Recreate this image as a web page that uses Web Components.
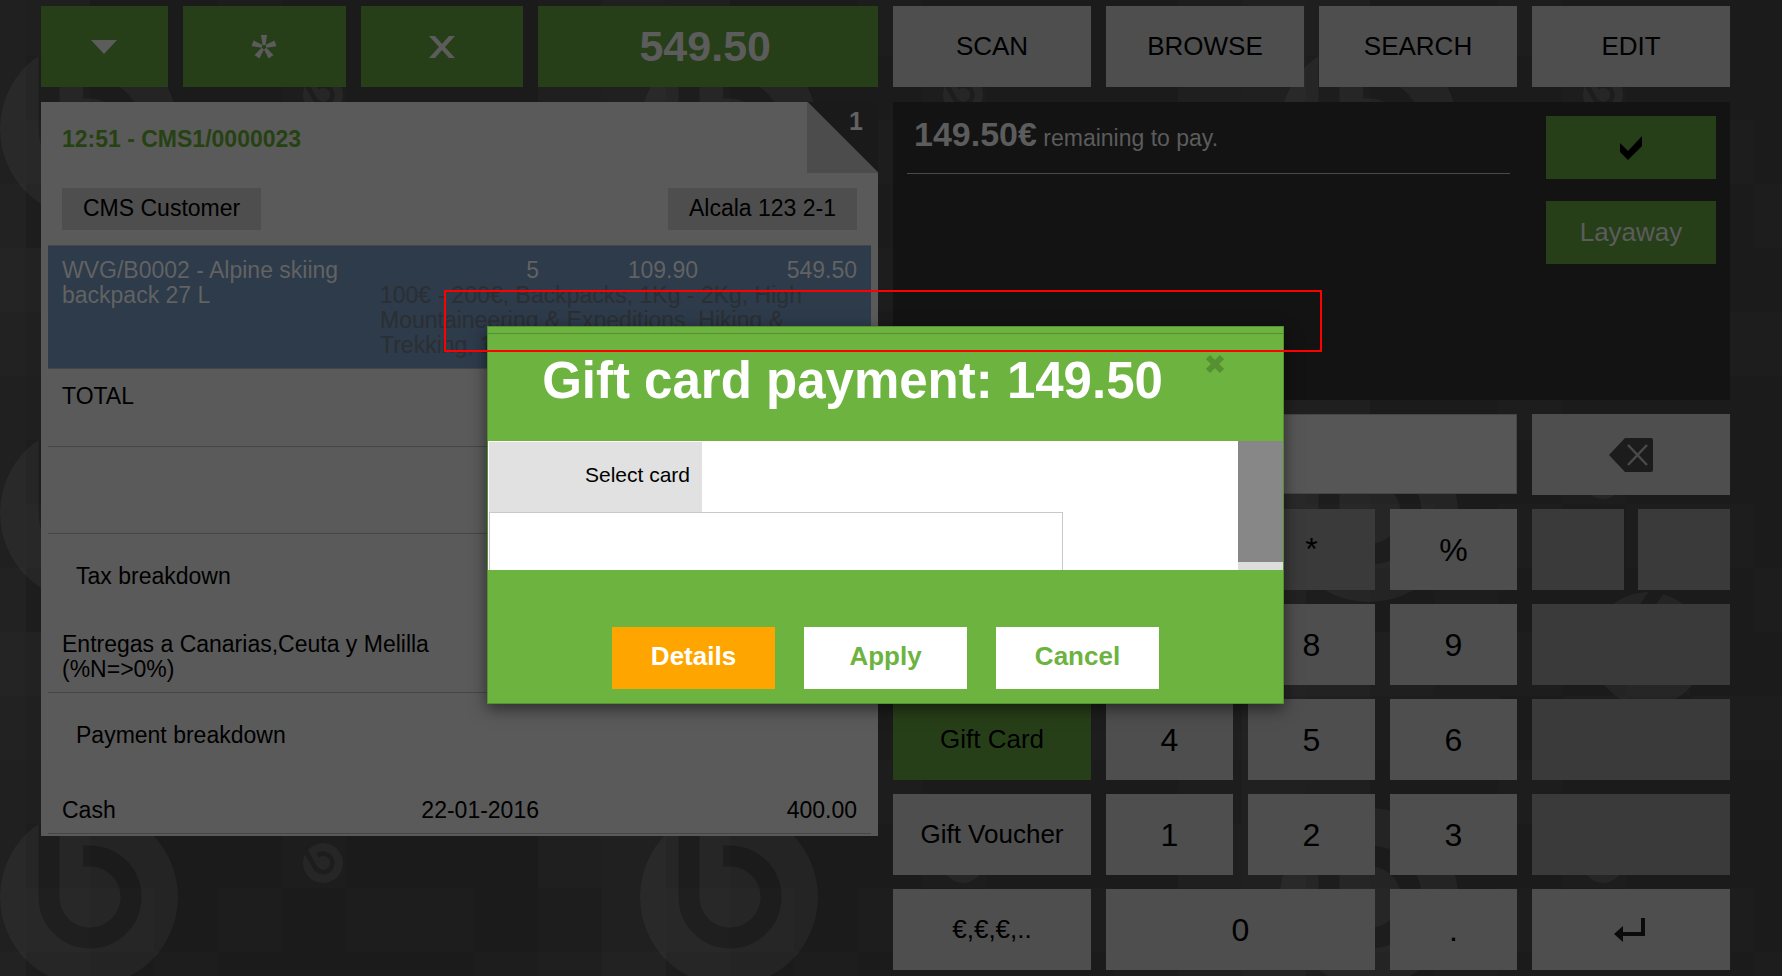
<!DOCTYPE html>
<html lang="en">
<head>
<meta charset="utf-8">
<meta name="viewport" content="width=device-width, initial-scale=1">
<title>Web POS</title>
<style>
    html, body {
        margin: 0;
        min-height: 100%;
        background: #1c1c1c;
    }
    body {
        font-family: "Liberation Sans", Arial, sans-serif;
        font-size: 23px;
        line-height: 25px;
        color: #000;
    }
</style>
</head>
<body>
<pos-app></pos-app>

<script>
// Tiled backdrop with the round "b" marks
class PosBackdrop extends HTMLElement {
    constructor() {
        super();
        this.attachShadow({ mode: 'open' });
    }

    connectedCallback() {
        // light level of each 64px square, one string per row
        const rows = [
            '1000100023',
            '2101011013',
            '1010000124',
            '4211010015',
            '3110101124',
            '2001000013'
        ];
        let squares = '';
        rows.forEach((row, y) => {
            [...row].forEach((level, x) => {
                squares += `<rect x="${x * 64}" y="${y * 64}" width="64" height="64" fill="#fff" fill-opacity="${level * 0.008}"/>`;
            });
        });

        this.shadowRoot.innerHTML = `
        <style>
            :host {
                display: block;
                position: absolute;
                inset: 0;
                overflow: hidden;
                background: #1b1b1b;
            }
            svg { display: block; width: 100%; height: 100%; }
        </style>
        <svg aria-hidden="true">
            <defs>
                <mask id="cut" maskUnits="userSpaceOnUse" x="-90" y="-90" width="180" height="180">
                    <circle r="89" fill="#fff"/>
                    <path d="M-40 -90V0A41 41 0 1 0 0 -41H-6" fill="none" stroke="#000" stroke-width="21"/>
                </mask>
                <g id="mark"><circle r="89" fill="#fff" fill-opacity="0.04" mask="url(#cut)"/></g>
                <pattern id="squares" x="26" y="56" width="640" height="384" patternUnits="userSpaceOnUse">${squares}</pattern>
                <pattern id="marks" x="0" y="24" width="640" height="384" patternUnits="userSpaceOnUse">
                    <use href="#mark" x="89" y="105"/>
                    <use href="#mark" transform="translate(323 71) rotate(-30) scale(0.225)"/>
                    <use href="#mark" transform="translate(368 241) rotate(35) scale(0.64)"/>
                </pattern>
            </defs>
            <rect width="100%" height="100%" fill="url(#squares)"/>
            <rect width="100%" height="100%" fill="url(#marks)"/>
        </svg>`;
    }
}

// Flat key. variant: green | light | total | digit | off | short
class PosKey extends HTMLElement {
    constructor() {
        super();
        this.attachShadow({ mode: 'open' });
    }

    connectedCallback() {
        const off = this.getAttribute('variant') === 'off';
        const label = this.getAttribute('label');
        this.shadowRoot.innerHTML = `
        <style>
            :host { display: block; height: 81px; }
            button {
                display: flex;
                align-items: center;
                justify-content: center;
                box-sizing: border-box;
                width: 100%;
                height: 100%;
                margin: 0;
                padding: 0 0 2px;
                border: 0;
                border-radius: 0;
                background: #4e4e4e;
                color: #000;
                font-family: inherit;
                font-size: 26px;
                line-height: 30px;
                white-space: nowrap;
                cursor: pointer;
            }
            :host([variant~="green"]) button { background: #273f18; }
            :host([variant~="light"]) button { color: #5c5c5c; }
            :host([variant~="total"]) button {
                padding-right: 6px;
                font-size: 43px;
                font-weight: bold;
                line-height: 50px;
            }
            :host([variant~="digit"]) button { padding: 0; font-size: 32px; line-height: 36px; }
            :host([variant~="off"]) button { background: #3a3a3a; font-size: 32px; line-height: 36px; }
            :host([variant~="short"]) { height: 63px; }
            :host([label]) button { padding: 0; }
        </style>
        <button type="button" ${off ? 'disabled' : ''} ${label ? `aria-label="${label}"` : ''}><slot></slot></button>`;
    }
}

class PosToolbar extends HTMLElement {
    constructor() {
        super();
        this.attachShadow({ mode: 'open' });
    }

    connectedCallback() {
        this.shadowRoot.innerHTML = `
        <style>
            :host { display: grid; grid-template-columns: 1fr 1fr; gap: 15px; }
            .left, .right { display: grid; gap: 15px; }
            .left { grid-template-columns: 127fr 163fr 163fr 340fr; }
            .right { grid-template-columns: repeat(4, 1fr); }
            svg { display: block; }
        </style>
        <div class="left">
            <pos-key variant="green light" label="Menu">
                <svg width="26" height="14" viewBox="0 0 26 14"><path d="M0 0H26L13 14Z" fill="#5c5c5c"/></svg>
            </pos-key>
            <pos-key variant="green light" label="New">
                <svg width="26" height="26" viewBox="-13 -13 26 26" fill="#5c5c5c">
                    <path d="M-3 -12H3L1.500 -2H-1.500Z"/>
                    <path d="M-3 -12H3L1.500 -2H-1.500Z" transform="rotate(72)"/>
                    <path d="M-3 -12H3L1.500 -2H-1.500Z" transform="rotate(144)"/>
                    <path d="M-3 -12H3L1.500 -2H-1.500Z" transform="rotate(216)"/>
                    <path d="M-3 -12H3L1.500 -2H-1.500Z" transform="rotate(288)"/>
                </svg>
            </pos-key>
            <pos-key variant="green light" label="Delete">
                <svg width="26" height="22" viewBox="0 0 26 22">
                    <path d="M0 0H6L13 8L20 0H26L16 11L26 22H20L13 14L6 22H0L10 11Z" fill="#5c5c5c"/>
                </svg>
            </pos-key>
            <pos-key variant="green light total">549.50</pos-key>
        </div>
        <div class="right">
            <pos-key>SCAN</pos-key>
            <pos-key>BROWSE</pos-key>
            <pos-key>SEARCH</pos-key>
            <pos-key>EDIT</pos-key>
        </div>`;
    }
}

class PosReceipt extends HTMLElement {
    constructor() {
        super();
        this.attachShadow({ mode: 'open' });
    }

    connectedCallback() {
        this.shadowRoot.innerHTML = `
        <style>
            :host {
                display: block;
                position: relative;
                align-self: start;
                box-sizing: border-box;
                padding: 25px 7px 2px;
                background: #5a5a5a;
            }
            h2 {
                margin: 0 14px 36px;
                font-size: 23px;
                line-height: 25px;
                color: #264212;
            }
            /* folded corner with the number of open receipts */
            .corner {
                position: absolute;
                top: 0;
                right: 0;
                box-sizing: border-box;
                width: 71px;
                height: 71px;
                padding: 7px 15px;
                background: linear-gradient(to top right, #4c4c4c 50%, #1a1a1a 51%);
                color: #626262;
                font-size: 25px;
                font-weight: bold;
                text-align: right;
            }
            .who { display: flex; justify-content: space-between; margin: 0 14px 15px; }
            .who button {
                height: 42px;
                padding: 0 21px 2px;
                border: 0;
                background: #4e4e4e;
                color: #000;
                font: inherit;
            }
            .row {
                display: grid;
                grid-template-columns: 2fr 1fr 1fr 1fr;
                padding: 12px 14px 10px;
                border-bottom: 1px solid #464646;
            }
            .num { text-align: right; }
            .selected { border-top: 1px solid #464646; background: #2d3b4b; color: #626262; }
            .name { grid-row: 1 / 3; }
            .attrs { grid-column: 2 / 5; color: #2b2e32; }
            .total { height: 52px; padding-top: 15px; }
            .blank { height: 64px; }
            .tax { grid-template-columns: 1fr 1fr; }
            .pay { padding-top: 19px; }
            h3 {
                margin: 0;
                padding: 30px 28px 31px;
                font-size: 23px;
                font-weight: normal;
                line-height: 25px;
            }
        </style>
        <h2>12:51 - CMS1/0000023</h2>
        <div class="corner">1</div>
        <div class="who">
            <button type="button">CMS Customer</button>
            <button type="button">Alcala 123 2-1</button>
        </div>
        <div class="row selected">
            <div class="name">WVG/B0002 - Alpine skiing backpack 27 L</div>
            <div class="num">5</div>
            <div class="num">109.90</div>
            <div class="num">549.50</div>
            <div class="attrs">100€ - 200€, Backpacks, 1Kg - 2Kg, High Mountaineering &amp; Expeditions, Hiking &amp; Trekking, 1</div>
        </div>
        <div class="row total"><div>TOTAL</div></div>
        <div class="row blank"></div>
        <h3>Tax breakdown</h3>
        <div class="row tax"><div>Entregas a Canarias,Ceuta y Melilla (%N=&gt;0%)</div></div>
        <h3>Payment breakdown</h3>
        <div class="row pay">
            <div>Cash</div>
            <div class="num">22-01-2016</div>
            <div></div>
            <div class="num">400.00</div>
        </div>`;
    }
}

class PosPayment extends HTMLElement {
    constructor() {
        super();
        this.attachShadow({ mode: 'open' });
    }

    connectedCallback() {
        this.shadowRoot.innerHTML = `
        <style>
            :host {
                display: flex;
                justify-content: space-between;
                gap: 36px;
                box-sizing: border-box;
                min-height: 298px;
                padding: 14px;
                background: #131313;
            }
            .due {
                flex: 1;
                align-self: start;
                padding: 0 7px 17px;
                border-bottom: 1px solid #4a4a4a;
                color: #5c5c5c;
                line-height: 36px;
            }
            strong { font-size: 34px; }
            .actions { display: flex; flex-direction: column; gap: 22px; width: 170px; }
            svg { display: block; }
        </style>
        <div class="due"><strong>149.50€</strong> remaining to pay.</div>
        <div class="actions">
            <pos-key variant="green short" label="Done">
                <svg width="24" height="26" viewBox="0 0 24 26"><path d="M1 8L9 16L23 1V11L9 25L1 17Z" fill="#000"/></svg>
            </pos-key>
            <pos-key variant="green light short">Layaway</pos-key>
        </div>`;
    }
}

class PosKeypad extends HTMLElement {
    constructor() {
        super();
        this.attachShadow({ mode: 'open' });
    }

    connectedCallback() {
        this.shadowRoot.innerHTML = `
        <style>
            :host {
                display: grid;
                grid-template-columns: 198fr 127fr 127fr 127fr 198fr;
                gap: 14px 15px;
            }
            input {
                grid-column: span 4;
                box-sizing: border-box;
                width: 100%;
                height: 80px;
                border: 1px solid #464646;
                background: #565656;
                font: inherit;
            }
            .pair { display: grid; grid-template-columns: 1fr 1fr; gap: 14px; }
            .wide { grid-column: span 2; }
            svg { display: block; }
        </style>
        <input type="text" aria-label="Amount" readonly>
        <pos-key label="Backspace">
            <svg width="46" height="36" viewBox="0 0 46 36">
                <path d="M17 1H43Q45 1 45 3V33Q45 35 43 35H17L1 18Z" fill="#1c1c1c"/>
                <path d="M20 8L39 28M39 8L20 28" stroke="#4a4a4a" stroke-width="2.500"/>
            </svg>
        </pos-key>

        <pos-key></pos-key>
        <pos-key variant="off"></pos-key>
        <pos-key variant="off">*</pos-key>
        <pos-key variant="digit">%</pos-key>
        <div class="pair">
            <pos-key variant="off"></pos-key>
            <pos-key variant="off"></pos-key>
        </div>

        <pos-key></pos-key>
        <pos-key variant="digit"></pos-key>
        <pos-key variant="digit">8</pos-key>
        <pos-key variant="digit">9</pos-key>
        <pos-key variant="off"></pos-key>

        <pos-key variant="green">Gift Card</pos-key>
        <pos-key variant="digit">4</pos-key>
        <pos-key variant="digit">5</pos-key>
        <pos-key variant="digit">6</pos-key>
        <pos-key variant="off"></pos-key>

        <pos-key>Gift Voucher</pos-key>
        <pos-key variant="digit">1</pos-key>
        <pos-key variant="digit">2</pos-key>
        <pos-key variant="digit">3</pos-key>
        <pos-key variant="off"></pos-key>

        <pos-key>€,€,€,..</pos-key>
        <pos-key class="wide" variant="digit">0</pos-key>
        <pos-key variant="digit">.</pos-key>
        <pos-key label="Enter">
            <svg width="34" height="26" viewBox="0 0 34 26">
                <path d="M29 1V17H8" fill="none" stroke="#0a0a0a" stroke-width="4"/>
                <path d="M0 17L9 9V25Z" fill="#0a0a0a"/>
            </svg>
        </pos-key>`;
    }
}

class PosDialog extends HTMLElement {
    constructor() {
        super();
        this.attachShadow({ mode: 'open' });
    }

    connectedCallback() {
        this.shadowRoot.innerHTML = `
        <style>
            :host {
                display: block;
                box-sizing: border-box;
                width: 45%;
                border: 1px solid #569131;
                background: #6db33f;
                box-shadow: 0 5px 15px rgba(0, 0, 0, 0.5);
            }
            header {
                display: flex;
                justify-content: center;
                gap: 42px;
                box-sizing: border-box;
                height: 108px;
                margin-top: 6px;
                padding: 17px 4px 0 0;
                border-top: 1px solid #569131;
            }
            h1 { margin: 0; color: #fff; font-size: 51px; line-height: 60px; white-space: nowrap; }
            .close {
                display: flex;
                align-items: center;
                justify-content: center;
                width: 20px;
                height: 26px;
                padding: 0;
                border: 0;
                background: none;
            }
            .body { display: flex; height: 129px; overflow: hidden; background: #fff; }
            .fields { flex: 1; padding: 1px; }
            label {
                display: block;
                box-sizing: border-box;
                width: 213px;
                height: 70px;
                padding: 20px 12px;
                background: #e1e1e1;
                font-size: 21px;
                text-align: right;
            }
            input {
                display: block;
                box-sizing: border-box;
                width: 574px;
                height: 70px;
                margin: 0;
                border: 1px solid #c8c8c8;
                border-radius: 0;
                background: #fff;
                font: inherit;
            }
            .track { width: 45px; background: #ddd; }
            .thumb { height: 121px; background: #878787; }
            footer { display: flex; justify-content: center; gap: 29px; padding: 57px 0 14px; }
            footer button {
                width: 163px;
                height: 62px;
                padding: 0 0 4px;
                border: 0;
                background: #fff;
                color: #6db33f;
                font-family: inherit;
                font-size: 26px;
                font-weight: bold;
            }
            footer .details { background: #ffa500; color: #fff; }
        </style>
        <header>
            <h1><slot name="title"></slot></h1>
            <button class="close" type="button" aria-label="Close">
                <svg width="20" height="20" viewBox="0 0 20 20"><path d="M3 3L17 17M17 3L3 17" stroke="#569131" stroke-width="6"/></svg>
            </button>
        </header>
        <div class="body">
            <div class="fields">
                <label for="card">Select card</label>
                <input id="card" type="text">
            </div>
            <div class="track"><div class="thumb"></div></div>
        </div>
        <footer>
            <button type="button" class="details">Details</button>
            <button type="button">Apply</button>
            <button type="button">Cancel</button>
        </footer>`;
    }
}

class PosApp extends HTMLElement {
    constructor() {
        super();
        this.attachShadow({ mode: 'open' });
    }

    connectedCallback() {
        this.shadowRoot.innerHTML = `
        <style>
            :host { display: block; position: relative; }
            main {
                position: relative;
                display: grid;
                gap: 15px;
                padding: 6px 52px 6px 41px;
            }
            .columns { display: grid; grid-template-columns: 1fr 1fr; gap: 15px; }
            .side { display: grid; align-content: start; gap: 14px; }
            .overlay {
                position: absolute;
                inset: 0 11px 0 0;
                display: flex;
                justify-content: center;
                align-items: flex-start;
                padding-top: 326px;
            }
            /* red outline over the top edge of the dialog */
            .outline {
                position: absolute;
                top: 290px;
                left: 444px;
                box-sizing: border-box;
                width: 878px;
                height: 62px;
                border: 2px solid #f00;
                pointer-events: none;
            }
        </style>
        <pos-backdrop></pos-backdrop>
        <main>
            <pos-toolbar></pos-toolbar>
            <div class="columns">
                <pos-receipt></pos-receipt>
                <div class="side">
                    <pos-payment></pos-payment>
                    <pos-keypad></pos-keypad>
                </div>
            </div>
        </main>
        <div class="overlay">
            <pos-dialog role="dialog" aria-label="Gift card payment">
                <span slot="title">Gift card payment: 149.50</span>
            </pos-dialog>
        </div>
        <div class="outline"></div>`;
    }
}

customElements.define('pos-backdrop', PosBackdrop);
customElements.define('pos-key', PosKey);
customElements.define('pos-toolbar', PosToolbar);
customElements.define('pos-receipt', PosReceipt);
customElements.define('pos-payment', PosPayment);
customElements.define('pos-keypad', PosKeypad);
customElements.define('pos-dialog', PosDialog);
customElements.define('pos-app', PosApp);
</script>
</body>
</html>
